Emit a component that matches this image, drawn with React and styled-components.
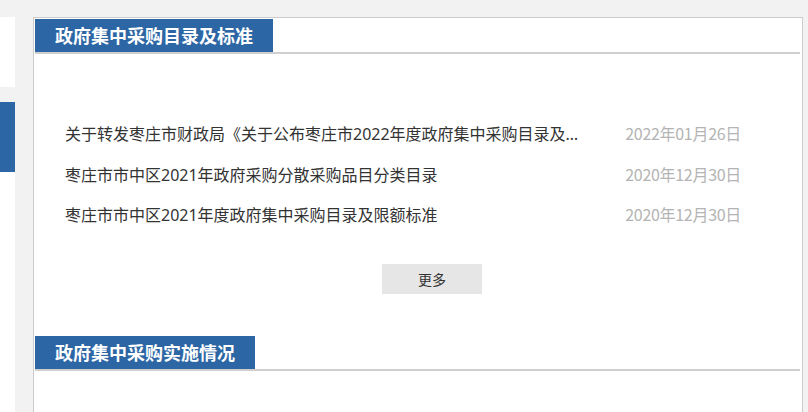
import React from "react";
import styled, { createGlobalStyle } from "styled-components";

const GlobalStyle = createGlobalStyle`
  html, body {
    margin: 0;
    padding: 0;
    background: #f2f2f2;
    overflow: hidden;
  }
  body {
    font-family: "Microsoft YaHei", "Noto Sans CJK SC", sans-serif;
  }
  * {
    box-sizing: border-box;
  }
`;

const Page = styled.div`
  display: flex;
  align-items: stretch;
  width: 808px;
  height: 412px;
  padding-top: 17px;
  overflow: hidden;
`;

const Sidebar = styled.div`
  width: 15px;
  margin-right: 18px;
  display: flex;
  flex-direction: column;
  gap: 15px;
  flex-shrink: 0;
`;

const SideCard = styled.div`
  background: #ffffff;
  height: ${(props) => (props.grow ? "auto" : "70px")};
  flex: ${(props) => (props.grow ? 1 : "none")};
  display: flex;
  flex-direction: column;
`;

const SideTab = styled.div`
  height: 70px;
  background: #2d66a4;
`;

const Panel = styled.div`
  width: 770px;
  height: 600px;
  flex-shrink: 0;
  background: #ffffff;
  border: 1px solid #cccccc;
  padding: 1px;
`;

const SectionHead = styled.div`
  display: flex;
  border-bottom: 2px solid #cfcfcf;
  margin-right: 1px;
`;

const SectionTitle = styled.h2`
  margin: 0;
  height: 33px;
  line-height: 33px;
  padding: 0 20px;
  background: #2d66a4;
  color: #ffffff;
  font-size: 18px;
  font-weight: bold;
  white-space: nowrap;
`;

const List = styled.ul`
  list-style: none;
  margin: 0;
  padding: 59px 60px 0 30px;
`;

const Row = styled.li`
  display: flex;
  align-items: center;
  height: 40.5px;
  font-size: 16px;
`;

const RowTitle = styled.span`
  width: 520px;
  color: #333333;
  font-family: "Noto Sans", "Noto Sans CJK SC", sans-serif;
  white-space: nowrap;
  overflow: hidden;
  text-overflow: ellipsis;
`;

const RowDate = styled.span`
  margin-left: auto;
  color: #b4b4b4;
  letter-spacing: -0.3px;
  white-space: nowrap;
`;

const MoreWrap = styled.div`
  display: flex;
  justify-content: center;
  padding: 29.5px 0 42px 28px;
`;

const MoreButton = styled.button`
  width: 100px;
  height: 30px;
  border: none;
  background: #e6e6e6;
  color: #333333;
  font-family: inherit;
  font-size: 14px;
  padding: 0;
  cursor: pointer;
`;

const items = [
  {
    title:
      "关于转发枣庄市财政局《关于公布枣庄市2022年度政府集中采购目录及限额标准的通知》的通知",
    date: "2022年01月26日",
  },
  {
    title: "枣庄市市中区2021年政府采购分散采购品目分类目录",
    date: "2020年12月30日",
  },
  {
    title: "枣庄市市中区2021年度政府集中采购目录及限额标准",
    date: "2020年12月30日",
  },
];

const App = () => (
  <>
    <GlobalStyle />
    <Page>
      <Sidebar>
        <SideCard />
        <SideCard grow>
          <SideTab />
        </SideCard>
      </Sidebar>
      <Panel>
        <SectionHead>
          <SectionTitle>政府集中采购目录及标准</SectionTitle>
        </SectionHead>
        <List>
          {items.map((item, index) => (
            <Row key={index}>
              <RowTitle>{item.title}</RowTitle>
              <RowDate>{item.date}</RowDate>
            </Row>
          ))}
        </List>
        <MoreWrap>
          <MoreButton>更多</MoreButton>
        </MoreWrap>
        <SectionHead>
          <SectionTitle>政府集中采购实施情况</SectionTitle>
        </SectionHead>
      </Panel>
    </Page>
  </>
);

export default App;
